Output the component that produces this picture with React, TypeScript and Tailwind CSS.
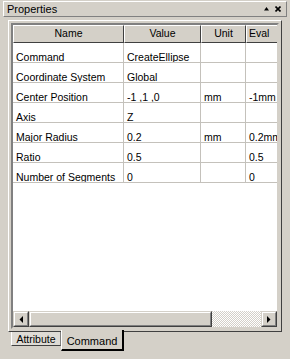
import React from "react";

const rows: [string, string, string, string][] = [
  ["Command", "CreateEllipse", "", ""],
  ["Coordinate System", "Global", "", ""],
  ["Center Position", "-1 ,1 ,0", "mm", "-1mm"],
  ["Axis", "Z", "", ""],
  ["Major Radius", "0.2", "mm", "0.2mm"],
  ["Ratio", "0.5", "", "0.5"],
  ["Number of Segments", "0", "", "0"],
];

const cols = "grid grid-cols-[111px_77px_45px_60px]";

function HeadCell({ children, last }: { children: React.ReactNode; last?: boolean }) {
  return (
    <div
      className={
        "h-[18px] flex items-center justify-center border-t border-l border-t-white border-l-white border-b border-b-[#404040] whitespace-nowrap overflow-hidden " +
        (last ? "" : "border-r border-r-[#404040]")
      }
    >
      {children}
    </div>
  );
}

function Cell({ children }: { children: React.ReactNode }) {
  return (
    <div className="h-[20px] border-r border-b border-[#c4c1bb] pl-[3px] pt-[8px] leading-[12px] whitespace-nowrap overflow-hidden">
      {children}
    </div>
  );
}

function ArrowBtn({ dir }: { dir: "left" | "right" }) {
  return (
    <div className="w-[16px] h-[16px] border border-t-[#d4d0c8] border-l-[#d4d0c8] border-r-[#404040] border-b-[#404040] bg-[#d4d0c8]">
      <div className="w-full h-full border border-t-white border-l-white border-r-[#808080] border-b-[#808080] flex items-center justify-center">
        <svg width="4" height="7" viewBox="0 0 4 7">
          {dir === "left" ? (
            <polygon points="4,0 4,7 0.5,3.5" fill="#000" />
          ) : (
            <polygon points="0,0 0,7 3.5,3.5" fill="#000" />
          )}
        </svg>
      </div>
    </div>
  );
}

export default function App() {
  return (
    <div className="w-[290px] h-[359px] bg-[#d4d0c8] overflow-hidden font-['Liberation_Sans',Arial,sans-serif] text-[10.5px] text-black">
      {/* title bar */}
      <div className="mt-[1px] ml-[3px] w-[284px] h-[16px] border border-t-white border-l-white border-r-[#808080] border-b-[#808080] flex items-center pl-[3px] pr-[5px]">
        <span className="leading-[12px] text-[11px]">Properties</span>
        <div className="ml-auto flex items-center gap-[6px]">
          <svg width="5" height="4" viewBox="0 0 5 4">
            <polygon points="2.5,0 5,3.5 0,3.5" fill="#000" />
          </svg>
          <svg width="6" height="6" viewBox="0 0 6 6">
            <path d="M0.5 0.5 L5.5 5.5 M5.5 0.5 L0.5 5.5" stroke="#000" strokeWidth="1.6" />
          </svg>
        </div>
      </div>

      {/* panel */}
      <div className="relative mt-[3px] ml-[8px] w-[274px] h-[312px] border border-t-white border-l-white border-r-[#404040] border-b-[#404040] p-[2px]">
        <div className="w-full h-full border-2 border-t-[#808080] border-l-[#808080] border-r-[#d4d0c8] border-b-[#d4d0c8] bg-white flex flex-col overflow-hidden">
          <div className={cols + " bg-[#d4d0c8]"}>
            <HeadCell>Name</HeadCell>
            <HeadCell>Value</HeadCell>
            <HeadCell>Unit</HeadCell>
            <HeadCell last>
              <span className="pl-[2px] w-full">Eval</span>
            </HeadCell>
          </div>
          {rows.map((r) => (
            <div key={r[0]} className={cols}>
              <Cell>{r[0]}</Cell>
              <Cell>{r[1]}</Cell>
              <Cell>{r[2]}</Cell>
              <Cell>{r[3]}</Cell>
            </div>
          ))}
          <div className="flex-1" />
          {/* horizontal scrollbar */}
          <div className="h-[16px] flex">
            <ArrowBtn dir="left" />
            <div className="w-[183px] h-[16px] border border-t-[#d4d0c8] border-l-[#d4d0c8] border-r-[#404040] border-b-[#404040] bg-[#d4d0c8]">
              <div className="w-full h-full border border-t-white border-l-white border-r-[#808080] border-b-[#808080]" />
            </div>
            <div className="flex-1 h-[16px] bg-[repeating-conic-gradient(#ffffff_0_25%,#d4d0c8_0_50%)] bg-[length:2px_2px]" />
            <ArrowBtn dir="right" />
          </div>
        </div>
      </div>

      {/* tabs */}
      <div className="ml-[11px] flex items-start">
        <div className="w-[50px] h-[14px] border-l border-l-white border-r border-r-[#808080] border-b border-b-[#404040] flex items-center justify-center bg-[#dedbd5] leading-[12px]">
          Attribute
        </div>
        <div className="relative z-10 -mt-[2px] w-[63px] h-[21px] border-l border-l-white border-r-2 border-r-[#000] border-b-2 border-b-[#000] flex items-center justify-center pt-[3px] leading-[12px] text-[11px] bg-[#d4d0c8]">
          Command
        </div>
      </div>
    </div>
  );
}
